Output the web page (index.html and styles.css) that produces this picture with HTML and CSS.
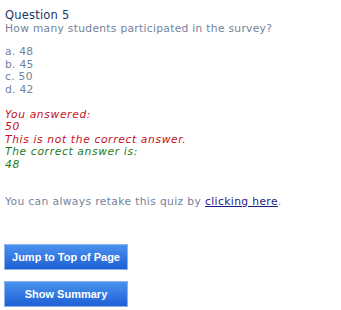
FILE: index.html
```html
<!DOCTYPE html>
<html>
<head>
<meta charset="utf-8">
<link rel="stylesheet" href="styles.css">
</head>
<body>
<div class="page">
  <div class="question">
    <div class="q-title">Question 5</div>
    <div class="q-text">How many students participated in the survey?</div>
  </div>
  <div class="options">
    <div>a. 48</div>
    <div>b. 45</div>
    <div>c. 50</div>
    <div>d. 42</div>
  </div>
  <div class="result">
    <div class="wrong">You answered:</div>
    <div class="wrong">50</div>
    <div class="wrong">This is not the correct answer.</div>
    <div class="right">The correct answer is:</div>
    <div class="right">48</div>
  </div>
  <div class="retake">You can always retake this quiz by <a href="#" class="link">clicking here</a>.</div>
  <div class="buttons">
    <button class="btn">Jump to Top of Page</button>
    <button class="btn">Show Summary</button>
  </div>
</div>
</body>
</html>
```
FILE: styles.css
```css
html, body {
  margin: 0;
  padding: 0;
  background: #ffffff;
}
.page {
  padding: 9px 5px 0 5px;
  font-family: "DejaVu Sans", Verdana, sans-serif;
  font-size: 10.7px;
  line-height: 12.5px;
  color: #72829b;
  letter-spacing: 0.3px;
}
.q-title {
  color: #1c3768;
  font-size: 11.5px;
  line-height: 13.5px;
  letter-spacing: 0.2px;
}
.options {
  margin-top: 11px;
}
.result {
  margin-top: 12.5px;
  font-style: italic;
  letter-spacing: 0.65px;
}
.wrong { color: #c4101a; }
.right { color: #1f7a1f; }
.retake {
  margin-top: 25px;
  letter-spacing: 0.38px;
}
.link {
  color: #1c1c84;
  text-decoration: underline;
}
.buttons {
  margin-top: 35px;
  display: flex;
  flex-direction: column;
  align-items: flex-start;
  gap: 11px;
  margin-left: -1px;
}
.btn {
  width: 124px;
  height: 26px;
  border: 1px solid #8db3ea;
  background: linear-gradient(#4a92ee, #1d60d5);
  color: #ffffff;
  font-family: "Liberation Sans", Arial, sans-serif;
  font-weight: bold;
  font-size: 11px;
  letter-spacing: 0;
  padding: 0;
  cursor: pointer;
}
```
